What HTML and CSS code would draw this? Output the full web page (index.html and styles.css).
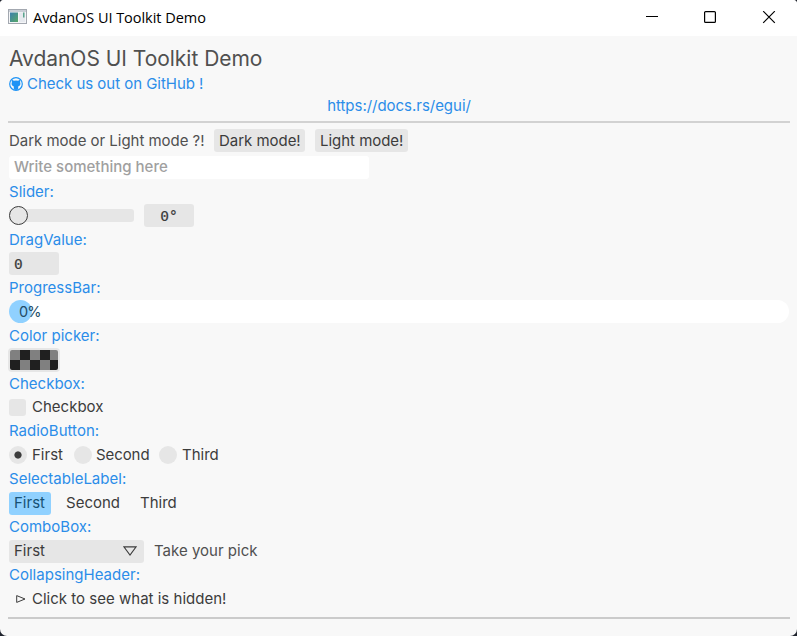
FILE: index.html
```html
<!DOCTYPE html>
<html lang="en">
<head>
<meta charset="utf-8">
<title>AvdanOS UI Toolkit Demo</title>
<link rel="stylesheet" href="styles.css">
</head>
<body>
<div class="window">
  <header class="titlebar">
    <svg class="app-icon" width="20" height="16" viewBox="0 0 20 16">
      <defs><linearGradient id="g" x1="0" y1="0" x2="1" y2="1"><stop offset="0" stop-color="#3b7fae"/><stop offset="1" stop-color="#58a868"/></linearGradient></defs>
      <rect x=".5" y=".5" width="18" height="14" fill="#f4f5f7" stroke="#a3a8b0"/>
      <rect x="1" y="1" width="17" height="2" fill="#c9ced6"/>
      <rect x="2" y="3.5" width="8" height="9.5" fill="url(#g)"/>
      <rect x="11" y="3.5" width="6" height="9.5" fill="#e6e9ee"/>
      <rect x="15" y="3.5" width="1.5" height="5" fill="#5aa58e"/>
    </svg>
    <span class="app-title">AvdanOS UI Toolkit Demo</span>
    <svg class="controls" width="132" height="14" viewBox="0 0 132 14" fill="none" stroke="#000">
      <path d="M0 5.500h12" />
      <rect x="58.6" y=".6" width="10.8" height="10.8" rx="1" stroke-width="1.2"/>
      <path d="M117.2.2l11.6 11.6M128.8.2l-11.6 11.6" stroke-width="1.2"/>
    </svg>
  </header>
  <main class="content">
    <h1 class="heading">AvdanOS UI Toolkit Demo</h1>
    <a class="github">
      <svg width="14" height="14" viewBox="0 0 14 14"><circle cx="7" cy="7" r="6.3" fill="#f8f8f8" stroke="#1e93f5" stroke-width="1.2"/><path d="M3 2.800l1.900.9q2.100-.5 4.200 0l1.900-.9q.5 1.200.1 2.200 1.100 3.700-1.900 4.400v3.200q-2.200.8-4.400 0V9.400Q1.800 8.700 2.900 5q-.4-1 .1-2.200z" fill="#1e93f5"/></svg>
      <span>Check us out on GitHub !</span>
    </a>
    <a class="docs">https://docs.rs/egui/</a>
    <hr class="rule">
    <div class="row modes"><span class="ask">Dark mode or Light mode ?!</span><button class="btn dark">Dark mode!</button><button class="btn light">Light mode!</button></div>
    <div class="field">Write something here</div>
    <div class="label">Slider:</div>
    <div class="row raised">
      <div class="slider"><span class="knob"></span></div>
      <div class="value centered">0°</div>
    </div>
    <div class="label">DragValue:</div>
    <div class="row raised"><div class="value">0</div></div>
    <div class="label">ProgressBar:</div>
    <div class="row raised"><div class="progress"><div class="fill">0%</div></div></div>
    <div class="label">Color picker:</div>
    <div class="row raised"><div class="swatch"></div></div>
    <div class="label">Checkbox:</div>
    <div class="row check-row"><span class="box"></span><span class="check-text">Checkbox</span></div>
    <div class="label">RadioButton:</div>
    <div class="row"><span class="radio on"></span><span class="first">First</span><span class="radio"></span><span class="second">Second</span><span class="radio"></span><span class="third">Third</span></div>
    <div class="label">SelectableLabel:</div>
    <div class="row"><span class="pick selected">First</span><span class="pick mid">Second</span><span class="pick">Third</span></div>
    <div class="label">ComboBox:</div>
    <div class="row">
      <div class="combo"><span>First</span><svg width="14" height="10" viewBox="0 0 14 10" fill="none" stroke="#3c3c3c" stroke-width="1.1"><path d="M.9.9h12.200L7 9z"/></svg></div>
      <span class="muted">Take your pick</span>
    </div>
    <div class="label">CollapsingHeader:</div>
    <div class="row collapse"><svg width="10" height="8" viewBox="0 0 10 8" fill="none" stroke="#3c3c3c"><path d="M.7.6v6.800L9 4z"/></svg><span>Click to see what is hidden!</span></div>
    <hr class="rule bottom">
  </main>
</div>
</body>
</html>
```
FILE: styles.css
```css
* { box-sizing: border-box; }
body { margin: 0; background: #20242e; }
.window {
  width: 797px; height: 636px; overflow: hidden;
  background: #f8f8f8; border-radius: 4px 4px 7px 7px;
  font: 15px/24px Inter, "Liberation Sans", sans-serif;
  letter-spacing: 0.01px; color: #3c3c3c; white-space: nowrap;
}
.titlebar { height: 36px; background: #fff; display: flex; align-items: center; padding: 0 22px 0 8px; }
.app-icon { margin-top: -2px; }
.app-title { margin-left: 5px; font: 14.5px/20px "Open Sans", "Noto Sans", sans-serif; letter-spacing: -0.04px; color: #000; }
.controls { margin-left: auto; margin-right: -3px; }
.content { display: flex; flex-direction: column; padding: 9px 8px 0 9px; }
.heading { margin: 0; font-size: 21px; font-weight: 400; line-height: 28px; letter-spacing: -0.03px; color: #505050; }
.github { display: flex; align-items: center; gap: 4px; height: 22px; letter-spacing: -0.03px; color: #2b8de9; }
.docs { height: 22px; line-height: 22px; text-align: center; letter-spacing: -0.03px; color: #2b8de9; }
.rule { width: 782px; height: 2px; margin: 4px 0 6px -1px; border: 0; background: #d2d2d2; }
.row { height: 24px; display: flex; align-items: center; }
.raised { height: 23px; margin-bottom: 1px; }
.modes { height: 23px; letter-spacing: -0.03px; color: #505050; }
.ask { width: 205px; }
.btn { height: 23px; padding: 0 5px; border: 0; border-radius: 3px; background: #e6e6e6; color: #3c3c3c; font: inherit; letter-spacing: inherit; line-height: 23px; text-align: left; }
.dark { width: 91px; }
.light { width: 93px; margin-left: 10px; }
.field { width: 360px; height: 23px; margin: 4px 0 1px; padding-left: 5px; border-radius: 3px; background: #fff; line-height: 22px; color: #a0a0a0; font-weight: 500; letter-spacing: 0; }
.label { height: 24px; color: #2b8de9; }
.slider { width: 125px; height: 13px; border-radius: 3px; background: #e6e6e6; display: flex; align-items: center; }
.knob { width: 19px; height: 19px; margin-left: -0.5px; border: 1.3px solid #3c3c3c; border-radius: 50%; background: #e6e6e6; }
.value { width: 50px; height: 23px; padding-left: 5px; border-radius: 3px; background: #e6e6e6; font: 14.5px/24px "DejaVu Sans Mono", monospace; -webkit-text-stroke: 0.2px #3c3c3c; }
.centered { margin-left: 10px; padding: 0; text-align: center; }
.progress { width: 780px; height: 23px; border-radius: 12px; background: #fff; }
.fill { width: 23px; height: 23px; padding-left: 10px; border-radius: 12px; background: #90d1ff; color: #234c66; line-height: 23px; font-size: 14.5px; letter-spacing: -1px; }
.swatch { width: 52px; height: 24px; flex: none; margin-left: -1px; border: 2px solid #e6e6e6; border-radius: 4px; background: repeating-conic-gradient(#202020 0 25%, #808080 0 50%) 0 0 / 20px 20px; }
.check-row { height: 23px; }
.box { width: 17px; height: 17px; margin-right: 6px; border-radius: 3px; background: #e6e6e6; }
.check-text { height: 24px; line-height: 22px; }
.radio { width: 18px; height: 18px; margin-right: 5px; border-radius: 50%; background: #e6e6e6; }
.on { background: radial-gradient(circle, #3c3c3c 0 3.2px, #e6e6e6 4px); }
.first { width: 42px; }
.second { width: 63px; margin-left: -1px; letter-spacing: -0.08px; }
.third { margin-left: 0; }
.pick { height: 23px; padding: 0 5px; line-height: 22px; }
.selected { width: 42px; border-radius: 3px; background: #90d1ff; color: #175175; }
.mid { width: 64px; margin: 0 10px; }
.combo { width: 135px; height: 23px; padding: 0 7px 0 5px; border-radius: 3px; background: #e6e6e6; display: flex; align-items: center; justify-content: space-between; }
.muted { margin-left: 10px; color: #505050; }
.collapse { padding-left: 7px; gap: 6px; }
.bottom { margin-top: 6px; background: #cbcbcb; }
```
